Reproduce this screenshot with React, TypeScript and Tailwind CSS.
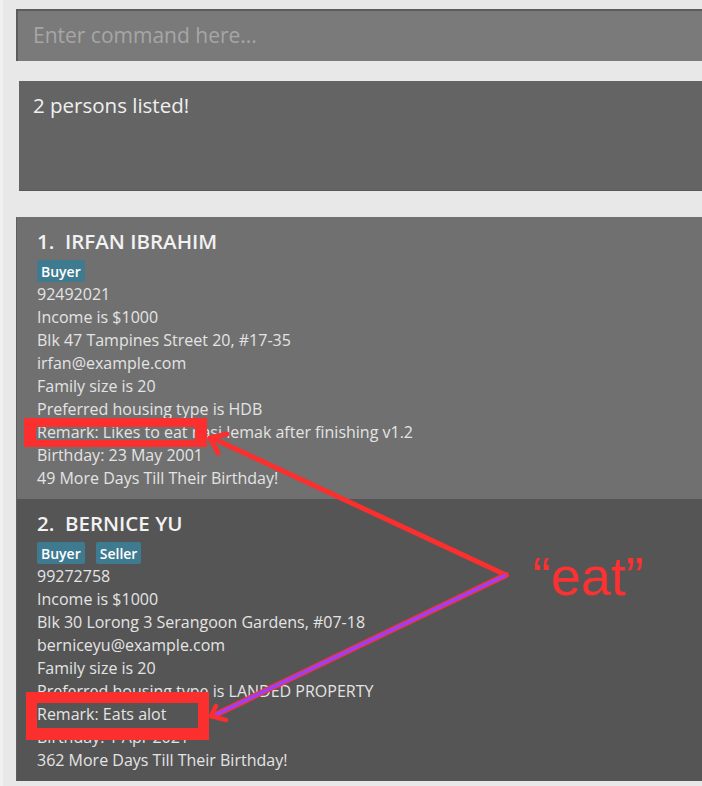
import React from 'react'

interface Person {
  name: string
  tags: string[]
  lines: string[]
}

const persons: Person[] = [
  {
    name: 'IRFAN IBRAHIM',
    tags: ['Buyer'],
    lines: [
      '92492021',
      'Income is $1000',
      'Blk 47 Tampines Street 20, #17-35',
      'irfan@example.com',
      'Family size is 20',
      'Preferred housing type is HDB',
      'Remark: Likes to eat nasi lemak after finishing v1.2',
      'Birthday: 23 May 2001',
      '49 More Days Till Their Birthday!',
    ],
  },
  {
    name: 'BERNICE YU',
    tags: ['Buyer', 'Seller'],
    lines: [
      '99272758',
      'Income is $1000',
      'Blk 30 Lorong 3 Serangoon Gardens, #07-18',
      'berniceyu@example.com',
      'Family size is 20',
      'Preferred housing type is LANDED PROPERTY',
      'Remark: Eats alot',
      'Birthday: 1 Apr 2021',
      '362 More Days Till Their Birthday!',
    ],
  },
]

const font = { fontFamily: '"Open Sans", "Noto Sans", sans-serif' }

function PersonCard({ person, index }: { person: Person; index: number }) {
  const bg = index % 2 === 0 ? 'bg-[#707070]' : 'bg-[#555555]'
  return (
    <div className={`${bg} h-[282px] pl-[20px] pt-[10px]`}>
      <div className="text-[20.5px] font-semibold leading-[28px] text-[#f2f2f2]">
        {index + 1}.&nbsp;&nbsp;{person.name}
      </div>
      <div className="mt-[5px] flex h-[22px] gap-[11px]">
        {person.tags.map((tag) => (
          <span
            key={tag}
            className="flex h-[22px] items-center rounded-[2px] bg-[#3e7a90] px-[4px] text-[14px] font-semibold text-white"
          >
            {tag}
          </span>
        ))}
      </div>
      <div className="mt-[1px] text-[16px] leading-[23px] text-[#e4e4e4]">
        {person.lines.map((line) => (
          <div key={line} className="whitespace-nowrap">
            {line}
          </div>
        ))}
      </div>
    </div>
  )
}

function Annotations() {
  return (
    <svg className="pointer-events-none absolute left-0 top-0" width="702" height="786" viewBox="0 0 702 786">
      {/* boxes round the remarks */}
      <path fill="#fc2f2f" fillRule="evenodd" d="M24 418H207V447H24Z M36 427V440H195V427Z" />
      <path fill="#fc2f2f" fillRule="evenodd" d="M26 692H209V740H26Z M37 703V728H198V703Z" />
      {/* arrow to the first remark */}
      <line x1="506" y1="575" x2="212" y2="438" stroke="#fc2f2f" strokeWidth="5" strokeLinecap="round" />
      <polyline points="227,434 210,438 218,453" fill="none" stroke="#fc2f2f" strokeWidth="5" strokeLinecap="round" strokeLinejoin="round" />
      {/* arrow to the second remark */}
      <line x1="506" y1="575" x2="213" y2="716" stroke="#fc2f2f" strokeWidth="6" strokeLinecap="round" />
      <line x1="506" y1="575" x2="213" y2="716" stroke="#9a40f8" strokeWidth="3.5" />
      <polyline points="216,706 211,716 226,720" fill="none" stroke="#fc2f2f" strokeWidth="4.5" strokeLinecap="round" strokeLinejoin="round" />
    </svg>
  )
}

export default function App() {
  return (
    <div className="relative h-[786px] w-[702px] overflow-hidden bg-[#e8e8e8]" style={font}>
      <div className="h-full border-l-[3px] border-[#f0f0f0] pl-[13px] pt-[9px]">
        <div className="flex h-[52px] items-center border-l-2 border-t-2 border-[#5c5c5c] bg-[#7a7a7a] pl-[15px]">
          <span className="text-[21px] text-[#a6a6a6]">Enter command here...</span>
        </div>
        <div className="mt-[20px] ml-[3px] h-[110px] border-b border-[#595959] bg-[#646464] pl-[14px] pt-[9px]">
          <span className="text-[20.5px] text-[#f0f0f0]">2 persons listed!</span>
        </div>
        <div className="mt-[26px] border-l border-[#5e5e5e]">
          {persons.map((p, i) => (
            <PersonCard key={p.name} person={p} index={i} />
          ))}
        </div>
      </div>
      <Annotations />
      <div
        className="absolute left-[533px] top-[549px] text-[54px] leading-none text-[#fc3131]"
        style={{ fontFamily: '"Liberation Sans", Arial, sans-serif' }}
      >
        “eat”
      </div>
    </div>
  )
}
